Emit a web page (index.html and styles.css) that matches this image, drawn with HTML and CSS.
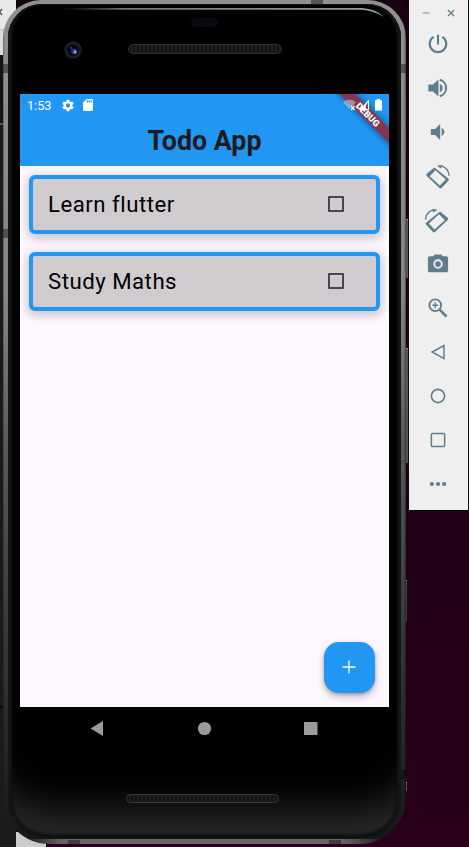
FILE: index.html
```html
<!DOCTYPE html>
<html lang="en">
<head>
<meta charset="utf-8">
<title>Todo App</title>
<link rel="stylesheet" href="styles.css">
</head>
<body>
<div class="desktop">
  <div class="back-window"><div class="back-tab"><svg width="6" height="12" viewBox="0 0 6 12"><path d="M-3 3l5 6M-3 9l5-6" /></svg></div></div>
  <div class="back-sheet"></div>
  <div class="side-key power"></div>
  <div class="side-key volume"></div>
  <div class="side-key notch"></div>
  <div class="side-key foot"></div>

  <div class="phone">
    <i class="seam s1"></i><i class="seam s2"></i><i class="seam s3"></i><i class="seam s4"></i>
    <i class="seam s5"></i><i class="seam s6"></i><i class="seam s7"></i><i class="seam s8"></i>
    <div class="glass">
      <div class="top-bezel">
        <svg width="369" height="90" viewBox="20 4 369 90">
          <defs><linearGradient id="g" gradientUnits="userSpaceOnUse" x1="58" y1="0" x2="383" y2="0"><stop offset="0" stop-color="#46504f" stop-opacity="0"/><stop offset=".2" stop-color="#6d7978"/><stop offset=".9" stop-color="#8d9998"/><stop offset="1" stop-color="#aab4b4"/></linearGradient></defs>
          <path d="M58 8H362Q376 9 384 17Q374 10.500 362 9.700H58Z" fill="url(#g)"/>
          <rect x="191" y="18" width="27" height="9" rx="4.5" fill="#090b10"/>
          <circle cx="73" cy="50" r="8.8" fill="#1d1d1f"/><circle cx="73" cy="50" r="5.5" fill="#07080f"/>
          <circle cx="74.2" cy="51.5" r="3" fill="#26358f"/><circle cx="75" cy="52" r="1.4" fill="#98a5f5"/><circle cx="71.3" cy="48" r=".9" fill="#4251a0"/>
        </svg>
        <div class="speaker"></div>
      </div>
      <div class="screen">
        <header>
          <div class="status">
            <span class="time">1:53</span>
            <svg class="gear" width="13" height="13" viewBox="2 2 20 20"><path d="M19.14 12.94c.04-.3.06-.61.06-.94s-.02-.64-.07-.94l2.03-1.58a.49.49 0 0 0 .12-.61l-1.92-3.32a.49.49 0 0 0-.59-.22l-2.39.96c-.5-.38-1.03-.7-1.62-.94l-.36-2.54a.48.48 0 0 0-.48-.41h-3.84c-.24 0-.43.17-.47.41l-.36 2.54c-.59.24-1.13.57-1.62.94l-2.39-.96a.48.48 0 0 0-.59.22L2.74 8.87c-.12.21-.08.47.12.61l2.03 1.58c-.05.3-.09.63-.09.94s.02.64.07.94l-2.03 1.58a.49.49 0 0 0-.12.61l1.92 3.32c.12.22.37.29.59.22l2.39-.96c.5.38 1.03.7 1.62.94l.36 2.54c.05.24.24.41.48.41h3.84c.24 0 .44-.17.47-.41l.36-2.54c.59-.24 1.13-.56 1.62-.94l2.39.96c.22.08.47 0 .59-.22l1.92-3.32a.48.48 0 0 0-.12-.61zM12 15.6a3.6 3.6 0 1 1 0-7.2 3.6 3.6 0 0 1 0 7.2z"/></svg>
            <svg class="sd" width="10" height="12" viewBox="4 2 16 20" preserveAspectRatio="none"><path d="M18 2h-8L4 8v12c0 1.100.9 2 2 2h12c1.100 0 2-.9 2-2V4c0-1.100-.9-2-2-2zm-6 6h-2V4h2v4zm3 0h-2V4h2v4zm3 0h-2V4h2v4z"/></svg>
            <svg class="signal" width="42" height="14" viewBox="342 98 42 14">
              <path opacity=".4" d="M343 102q6.500-5 13 0l-3.200 4h-2.300v2.500l-1.500.5z"/>
              <path d="M351 106l3.500 4m0-4l-3.500 4" stroke="#fff" stroke-width="1.200"/>
              <path d="M359 110.300L369 99.500v10.800zM365.500 106v3.300h2.500V102z" fill-rule="evenodd"/><path d="M360 110.300l5.500-6v6z"/>
              <path d="M375 100.200h1.800V99h3.400v1.200h1.800v10.300h-7z"/>
            </svg>
          </div>
          <h1>Todo App</h1>
        </header>
        <main>
          <div class="card"><span>Learn flutter</span><i class="check"></i></div>
          <div class="card"><span>Study Maths</span><i class="check"></i></div>
        </main>
        <div class="fab"><svg width="14" height="14" viewBox="0 0 14 14"><path d="M7 .5v13M.5 7h13"/></svg></div>
        <div class="ribbon-clip"><div class="ribbon">DEBUG</div></div>
      </div>
      <div class="bottom-bezel">
        <svg class="nav" width="369" height="44" viewBox="20 707 369 44"><path d="M90.500 728.500L103 721v15z"/><circle cx="204.500" cy="728.500" r="6.600"/><rect x="304" y="722" width="13.500" height="13"/></svg>
        <div class="speaker low"></div>
      </div>
    </div>
  </div>

  <aside class="tools">
    <div class="window-buttons">
      <svg width="40" height="12" viewBox="418 7 40 12"><path d="M422.500 13h7" opacity=".65"/><path d="M448 10l6 6m0-6l-6 6"/></svg>
    </div>
    <svg class="tool" viewBox="0 0 24 24"><path class="line" d="M12 2v10.500M7.200 4.200a9 9 0 1 0 9.600 0" stroke-width="2.300"/></svg>
    <svg class="tool" viewBox="0 0 24 24"><path d="M1.500 8.300v7.400h5L12.500 21.300V2.700L6.500 8.300zM14 7.300v9.400q3.200-1.500 3.200-4.700t-3.200-4.700z"/><path class="line" d="M14 3.100a9.200 9.200 0 0 1 0 17.800" stroke-width="2.200"/></svg>
    <svg class="tool" viewBox="0 0 24 24"><path d="M4.200 8.600v6.800h4.600l5.600 5.200V3.400L8.800 8.600zM16 7.400v9.200q3-1.500 3-4.600t-3-4.600z"/></svg>
    <svg class="tool wide" viewBox="425.5 163.500 25 25"><path id="rot" d="M433.700 168Q435 166.600 436.300 168L449 178.200Q450 179.100 449 180.100L442.300 187.300Q441 188.700 439.700 187.300L427.300 175.400Q426.200 174.300 427.300 173.200zM436 169.800L430.200 175.700L440.400 185.100L446.200 179z" fill-rule="evenodd"/><path class="line" d="M439 165.900C444.500 164.800 449.300 169 449.500 175.300" stroke-width="1.300"/><path d="M437.500 165.300l5.500-.8-1.500 3.600z"/></svg>
    <svg class="tool wide" viewBox="425.5 163.500 25 25"><g transform="matrix(-1 0 0 1 875.500 0)"><path d="M433.700 168Q435 166.600 436.300 168L449 178.200Q450 179.100 449 180.100L442.300 187.300Q441 188.700 439.700 187.300L427.300 175.400Q426.200 174.300 427.300 173.200zM436 169.800L430.200 175.700L440.400 185.100L446.200 179z" fill-rule="evenodd"/><path class="line" d="M439 165.900C444.500 164.800 449.300 169 449.500 175.300" stroke-width="1.300"/><path d="M437.500 165.300l5.500-.8-1.500 3.600z"/></g></svg>
    <svg class="tool" viewBox="0 0 24 24"><path d="M8.500 1.500L6.700 3.500H3a2 2 0 0 0-2 2v13.500a2 2 0 0 0 2 2h18a2 2 0 0 0 2-2V5.500a2 2 0 0 0-2-2h-3.700L15.500 1.500zM12 17.200a5.200 5.200 0 1 1 0-10.400 5.200 5.200 0 0 1 0 10.400z" fill-rule="evenodd"/><circle cx="12" cy="12" r="3.100"/></svg>
    <svg class="tool" viewBox="0 0 24 24"><g class="line"><circle cx="9" cy="9" r="6.400" stroke-width="2"/><path d="M14 14l7.300 7.300" stroke-width="2.800"/><path d="M9 5.800v6.400M5.800 9h6.400" stroke-width="1.400"/></g></svg>
    <svg class="tool" viewBox="0 0 24 24"><path class="line" d="M18.500 5v14.200L5.500 12z" stroke-width="1.600"/></svg>
    <svg class="tool" viewBox="0 0 24 24"><circle class="line" cx="12" cy="12" r="7.200" stroke-width="1.700"/></svg>
    <svg class="tool" viewBox="0 0 24 24"><rect class="line" x="4.800" y="4.800" width="14.400" height="14.400" rx="1" stroke-width="1.600"/></svg>
    <svg class="tool" viewBox="0 0 24 24"><circle cx="5.300" cy="12" r="2.300"/><circle cx="12" cy="12" r="2.300"/><circle cx="18.700" cy="12" r="2.300"/></svg>
  </aside>
</div>
</body>
</html>
```
FILE: styles.css
```css
* { box-sizing: border-box; }
body { margin: 0; font-family: Roboto, sans-serif; }
.desktop { position: relative; width: 469px; height: 847px; overflow: hidden; background: linear-gradient(#17000f, #1d0015 50%, #2a001c); }
.back-window { position: absolute; left: 0; top: 0; width: 16px; height: 847px; background: linear-gradient(#141414 0 123px, #555 123px 125px, #1a1a1a 125px 706px, #080808 706px 708px, #1b1b1b 708px); }
.back-tab { height: 55px; background: linear-gradient(#e8e8e8 0 29px, #bbb 29px 30px, #ddd 30px); }
.back-tab svg { display: block; fill: none; stroke: #555; stroke-width: 1.5; transform: translateY(6px); }
.back-sheet { position: absolute; left: 16px; top: 832px; width: 30px; height: 15px; background: #ccc; }

.side-key { position: absolute; left: 404px; width: 4px; background: #555; border-top: 1px solid #999; }
.power { top: 219px; height: 59px; }
.volume { top: 348px; height: 115px; }
.notch { top: 580px; height: 41px; width: 3px; background: #444; }
.foot { top: 782px; height: 9px; width: 3px; }

.phone { position: absolute; left: 3px; top: 0; width: 403px; height: 844px; padding: 4px 5px 5px; border-radius: 38px 38px 46px 46px; background: linear-gradient(90deg, #0007 0, transparent 1px 401px, #0007), linear-gradient(90deg, transparent 20px, #666 60px 340px, transparent 383px) 0 100% / 100% 5px no-repeat, linear-gradient(#909090, #858585 35%, #5b5b5b 52%, #383838 75%, #222 92%, #161616 100%); }
.seam { position: absolute; background: #0006; }
.s1, .s2, .s5, .s6 { width: 5px; height: 9px; }
.s1 { left: 0; top: 64px; }
.s2 { right: 0; top: 64px; }
.s3, .s4, .s7, .s8 { width: 12px; height: 4px; }
.s3 { left: 308px; top: 0; }
.s4 { left: 65px; bottom: 0; }
.s5 { left: 0; top: 229px; }
.s6 { right: 0; top: 770px; }
.s7 { left: 326px; bottom: 0; }
.s8 { display: none; }
.glass { height: 835px; display: flex; flex-direction: column; padding: 0 12px; border-radius: 34px 34px 42px 42px; overflow: hidden; background: #000; box-shadow: inset 0 0 0 1px #151515, inset 2px 0 2px #1b1b1b, inset -2px 0 2px #1b1b1b, inset 5px 0 2px -1px #111, inset -5px 0 2px -1px #111, inset 0 -7px 3px -2px #111, inset 0 -55px 38px -25px #292929; }
.top-bezel { height: 90px; flex: none; position: relative; }
.top-bezel svg { display: block; }
.speaker { position: absolute; left: 108px; top: 40px; width: 154px; height: 10px; border: 1px solid #30302e; border-radius: 5px; background: repeating-linear-gradient(90deg, #151412 0 2px, #201e1b 2px 4px); }

.screen { position: relative; flex: none; height: 613px; background: #fef7ff; overflow: hidden; }
header { height: 72px; background: #2196f3; }
.status { position: relative; z-index: 2; height: 22px; display: flex; align-items: center; padding-left: 7px; color: #fff; fill: #fff; }
.time { font-size: 12.600px; width: 25px; line-height: 22px; padding-top: 1px; white-space: nowrap; }
.gear { margin-left: 10px; width: 12px; }
.sd { margin-left: 9px; }
.signal { margin-left: auto; margin-right: 5px; }
h1 { margin: 0; padding-top: 1px; text-align: center; color: #1d1b20; font-size: 26.800px; line-height: 48px; font-weight: 700; }
main { display: flex; flex-direction: column; gap: 18px; padding: 9px; }
header + main { margin-top: 0; }
.card { height: 59px; display: flex; align-items: center; justify-content: space-between; padding: 0 32px 0 15px; border: 4px solid #2196f3; border-radius: 6px; background: #cfcbcf; box-shadow: 0 3px 10px 2px #0003; font-size: 22.200px; letter-spacing: .5px; color: #000; }
.card span { margin-top: -1px; }
.check { width: 16px; height: 16px; margin-top: -1px; border: 2px solid #49454f; border-radius: 1px; }
.fab { position: absolute; right: 14px; bottom: 14px; width: 51px; height: 51px; display: grid; place-items: center; border-radius: 15px; background: #2196f3; box-shadow: 0 4px 7px #0004, 0 1px 3px #0003; }
.fab svg { margin: -1px 0 0 -1px; fill: none; stroke: #fff; stroke-width: 1.300; }
.ribbon-clip { position: absolute; right: 0; top: 0; width: 70px; height: 70px; overflow: hidden; }
.ribbon { position: absolute; left: -6px; top: 15px; width: 110px; height: 11px; line-height: 11px; text-align: center; font-size: 9.200px; font-weight: 900; color: #fff; background: #8b2d43e8; box-shadow: 0 0 6px #0008; transform: rotate(45deg); }

.bottom-bezel { flex: 1; position: relative; }
.nav { display: block; fill: #9b9b9b; }
.speaker.low { left: 106px; top: 87px; width: 153px; height: 9px; border-color: #373733; }

.tools { position: absolute; left: 409px; top: 0; width: 60px; height: 511px; display: flex; flex-direction: column; align-items: center; padding-right: 2px; background: #efefef; border-right: 1px solid #111; border-bottom: 1px solid #000; fill: #607d8b; }
.window-buttons { height: 22px; padding-top: 7px; flex: none; }
.window-buttons svg { display: block; fill: none; stroke: #607d8b; stroke-width: 1.300; }
.tool { width: 22px; height: 22px; margin: 11px 0; flex: none; overflow: visible; }
.tool.wide { width: 25px; height: 25px; margin: 9.500px 0; }
.line { fill: none; stroke: #607d8b; }
```
